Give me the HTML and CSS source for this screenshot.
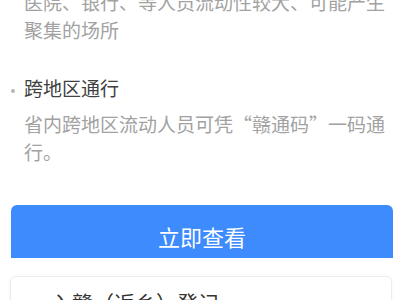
FILE: index.html
```html
<!DOCTYPE html>
<html lang="zh-CN">
<head>
<meta charset="utf-8">
<link rel="stylesheet" href="styles.css">
</head>
<body>
<div class="page">
  <section class="info">
    <p class="desc">医院、银行、等人员流动性较大、可能产生聚集的场所</p>
    <h3 class="item-title">跨地区通行</h3>
    <p class="desc">省内跨地区流动人员可凭“赣通码”一码通行。</p>
  </section>
  <div class="btn-clip">
    <div class="btn">立即查看</div>
  </div>
  <div class="card">
    <span class="card-title">入赣（返乡）登记</span>
    <svg class="chev" width="10" height="18" viewBox="0 0 10 18"><path d="M2 2 L8 9 L2 16" fill="none" stroke="#c8c8c8" stroke-width="1.6"/></svg>
  </div>
</div>
</body>
</html>
```
FILE: styles.css
```css
html, body {
  margin: 0;
  padding: 0;
  background: #fff;
  overflow: hidden;
}
body {
  font-family: "Noto Sans CJK SC", "Noto Sans", sans-serif;
}
.page {
  width: 400px;
  height: 300px;
  overflow: hidden;
}
.info {
  margin-top: -12px;
  padding-left: 24px;
  width: 370px;
}
.desc {
  margin: 0;
  font-size: 19px;
  line-height: 28px;
  color: #a2a2a2;
}
.item-title {
  position: relative;
  margin: 30px 0 8px;
  font-size: 19px;
  line-height: 28px;
  font-weight: normal;
  color: #404040;
}
.item-title::before {
  content: "";
  position: absolute;
  left: -13px;
  top: 15px;
  width: 4px;
  height: 4px;
  border-radius: 50%;
  background: #b5b5b5;
}
.btn-clip {
  margin: 39px 0 0 11px;
  width: 382px;
  height: 53px;
  overflow: hidden;
}
.btn {
  height: 62px;
  border-radius: 6px 6px 0 0;
  background: #3d8bfd;
  color: #fff;
  font-size: 22px;
  display: flex;
  align-items: center;
  justify-content: center;
}
.card {
  margin: 18px 0 0 10px;
  width: 382px;
  height: 60px;
  border: 1px solid #ececec;
  border-radius: 6px;
  box-sizing: border-box;
  display: flex;
  align-items: flex-start;
  padding: 10px 6px 0 40px;
  box-shadow: 0 0 4px rgba(0,0,0,0.04);
}
.card-title {
  flex: 1;
  font-size: 21px;
  line-height: 30px;
  color: #333;
}
.chev {
  margin-top: 12px;
}
```
